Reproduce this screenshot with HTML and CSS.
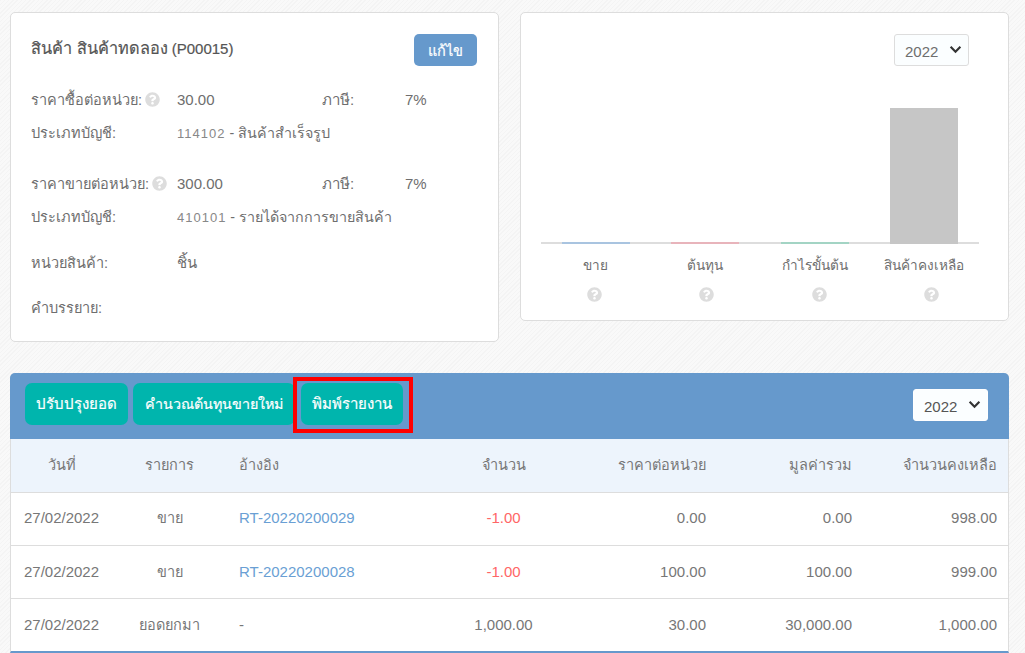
FILE: index.html
```html
<!DOCTYPE html>
<html lang="en">
<head>
  <meta charset="UTF-8" />
  <title>Product</title>
  <link rel="stylesheet" href="styles.css">
</head>
<body>

<svg class="defs" width="0" height="0">
  <symbol id="help" viewBox="0 0 512 512">
    <path d="M504 256c0 136.997-111.043 248-248 248S8 392.997 8 256C8 119.083 119.043 8 256 8s248 111.083 248 248zM262.655 90c-54.497 0-89.255 22.957-116.549 63.758-3.536 5.286-2.353 12.415 2.715 16.258l34.699 26.31c5.205 3.947 12.621 3.008 16.665-2.122 17.864-22.658 30.113-35.797 57.303-35.797 20.429 0 45.698 13.148 45.698 32.958 0 14.976-12.363 22.667-32.534 33.976C247.128 238.528 216 254.941 216 296v4c0 6.627 5.373 12 12 12h56c6.627 0 12-5.373 12-12v-1.333c0-28.462 83.186-29.647 83.186-106.667 0-58.002-60.165-102-116.531-102zM256 338c-25.365 0-46 20.635-46 46 0 25.364 20.635 46 46 46s46-20.636 46-46c0-25.365-20.635-46-46-46z"/>
  </symbol>
</svg>

<div class="top-row">
  <div class="card info-card">
    <div class="info-head">
      <h2><span class="title-th">สินค้า สินค้าทดลอง</span> (P00015)</h2>
      <button class="edit-btn">แก้ไข</button>
    </div>

    <div class="info-row">
      <span class="label">ราคาซื้อต่อหน่วย:<svg class="help-icon"><use href="#help"/></svg></span>
      <span class="value">30.00</span>
      <span class="tax-label">ภาษี:</span>
      <span>7%</span>
    </div>
    <div class="info-row">
      <span class="label">ประเภทบัญชี:</span>
      <span class="account"><span class="code">114102</span> - สินค้าสำเร็จรูป</span>
    </div>

    <div class="info-row group-start">
      <span class="label">ราคาขายต่อหน่วย:<svg class="help-icon"><use href="#help"/></svg></span>
      <span class="value">300.00</span>
      <span class="tax-label">ภาษี:</span>
      <span>7%</span>
    </div>
    <div class="info-row">
      <span class="label">ประเภทบัญชี:</span>
      <span class="account"><span class="code">410101</span> - รายได้จากการขายสินค้า</span>
    </div>

    <div class="info-row unit-row">
      <span class="label">หน่วยสินค้า:</span>
      <span class="value">ชิ้น</span>
    </div>
    <div class="info-row desc-row">
      <span class="label">คำบรรยาย:</span>
    </div>
  </div>

  <div class="card chart-card">
    <div class="chart-top">
      <div class="year-select">2022<svg class="chevron" viewBox="0 0 12 8"><path d="M1.5 1.5 6 6l4.5-4.5"/></svg></div>
    </div>
    <div class="bars">
      <div class="bar-slot"><div class="bar bar-sale"></div></div>
      <div class="bar-slot"><div class="bar bar-cost"></div></div>
      <div class="bar-slot"><div class="bar bar-profit"></div></div>
      <div class="bar-slot"><div class="bar bar-stock"></div></div>
    </div>
    <div class="bar-labels">
      <span>ขาย</span>
      <span>ต้นทุน</span>
      <span>กำไรขั้นต้น</span>
      <span>สินค้าคงเหลือ</span>
    </div>
    <div class="bar-help">
      <span><svg class="help-icon"><use href="#help"/></svg></span>
      <span><svg class="help-icon"><use href="#help"/></svg></span>
      <span><svg class="help-icon"><use href="#help"/></svg></span>
      <span><svg class="help-icon"><use href="#help"/></svg></span>
    </div>
  </div>
</div>

<div class="stock-panel">
  <div class="panel-bar">
    <button class="green-btn">ปรับปรุงยอด</button>
    <button class="green-btn calc-btn">คำนวณต้นทุนขายใหม่</button>
    <button class="green-btn marked">พิมพ์รายงาน</button>
    <div class="year-select panel-select">2022<svg class="chevron" viewBox="0 0 12 8"><path d="M1.5 1.5 6 6l4.5-4.5"/></svg></div>
  </div>
  <table>
    <colgroup>
      <col class="col-date"><col class="col-type"><col class="col-ref"><col class="col-qty"><col class="col-price"><col class="col-total"><col>
    </colgroup>
    <thead>
      <tr>
        <th class="center">วันที่</th>
        <th class="center">รายการ</th>
        <th>อ้างอิง</th>
        <th class="center">จำนวน</th>
        <th class="num">ราคาต่อหน่วย</th>
        <th class="num">มูลค่ารวม</th>
        <th class="num">จำนวนคงเหลือ</th>
      </tr>
    </thead>
    <tbody>
      <tr>
        <td class="center">27/02/2022</td>
        <td class="center thai">ขาย</td>
        <td><a href="#">RT-20220200029</a></td>
        <td class="center minus">-1.00</td>
        <td class="num">0.00</td>
        <td class="num">0.00</td>
        <td class="num">998.00</td>
      </tr>
      <tr>
        <td class="center">27/02/2022</td>
        <td class="center thai">ขาย</td>
        <td><a href="#">RT-20220200028</a></td>
        <td class="center minus">-1.00</td>
        <td class="num">100.00</td>
        <td class="num">100.00</td>
        <td class="num">999.00</td>
      </tr>
      <tr>
        <td class="center">27/02/2022</td>
        <td class="center thai">ยอดยกมา</td>
        <td>-</td>
        <td class="center">1,000.00</td>
        <td class="num">30.00</td>
        <td class="num">30,000.00</td>
        <td class="num">1,000.00</td>
      </tr>
    </tbody>
  </table>
</div>

</body>
</html>
```

FILE: styles.css
```css
body {
  font-family: "Liberation Sans", Arial, sans-serif;
  font-size: 15px;
  margin: 0;
  padding: 12px 16px 0 10px;
  color: #6e6e6e;
  overflow: hidden;
  background-color: #f7f7f7;
  background-image: repeating-linear-gradient(135deg, #f4f4f4 0, #f4f4f4 1px, #f9f9f9 1px, #f9f9f9 3px);
}

.defs {
  position: absolute;
}

.top-row {
  display: flex;
  justify-content: space-between;
  align-items: flex-start;
}

.card {
  width: 489px;
  box-sizing: border-box;
  background-color: #fff;
  border: 1px solid #ddd;
  border-radius: 5px;
}

/* product info */
.info-card {
  height: 330px;
  padding: 21px 21px 0 20px;
}

.info-head {
  display: flex;
  justify-content: space-between;
  align-items: center;
  margin-bottom: 17px;
}

h2 {
  margin: 0 0 4px;
  font-size: 15px;
  font-weight: normal;
  color: #555;
  -webkit-text-stroke: 0.2px #555;
}

.title-th {
  font-size: 16.3px;
}

.edit-btn {
  width: 63px;
  height: 32px;
  padding: 0;
  background-color: #6699cc;
  color: #fff;
  border: none;
  border-radius: 5px;
  font-family: inherit;
  font-size: 14.5px;
  -webkit-text-stroke: 0.2px #fff;
}

.info-row {
  display: grid;
  grid-template-columns: 146px 145px 83px 1fr;
  align-items: center;
  height: 33px;
}

.group-start {
  margin-top: 18px;
}

.unit-row {
  margin-top: 13px;
}

.desc-row {
  margin-top: 12px;
}

.label {
  display: flex;
  align-items: center;
  white-space: nowrap;
  font-size: 14.5px;
}

.account {
  grid-column: 2 / 5;
  font-size: 14.3px;
}

.code {
  font-size: 13px;
  letter-spacing: 1px;
  color: #888;
}

.help-icon {
  width: 15px;
  height: 15px;
  margin-left: 3px;
  fill: #ddd;
}

/* chart */
.chart-card {
  height: 309px;
  padding: 21px 29px 0 20px;
}

.chart-top {
  display: flex;
  justify-content: flex-end;
  padding-right: 10px;
}

.year-select {
  display: flex;
  align-items: center;
  justify-content: space-between;
  box-sizing: border-box;
  width: 75px;
  height: 32px;
  padding: 3px 6px 0 10px;
  background-color: #fbfeff;
  border: 1px solid #ddd;
  border-radius: 3px;
  font-size: 15px;
}

.chevron {
  width: 13px;
  height: 9px;
  margin-bottom: 5px;
  fill: none;
  stroke: #333;
  stroke-width: 2;
}

.bars {
  display: flex;
  align-items: flex-end;
  height: 176px;
  border-bottom: 2px solid #ddd;
}

.bar-slot {
  flex: 1;
  display: flex;
  justify-content: center;
}

.bar {
  width: 68px;
  margin-bottom: -2px;
}

.bar-sale {
  height: 2px;
  background-color: #a9c4e0;
}

.bar-cost {
  height: 2px;
  background-color: #e8b4bb;
}

.bar-profit {
  height: 2px;
  background-color: #a3d4c4;
}

.bar-stock {
  height: 136px;
  background-color: #c6c6c6;
}

.bar-labels {
  display: flex;
  margin-top: 12px;
  height: 20px;
  line-height: 20px;
  font-size: 13.6px;
}

.bar-labels span {
  flex: 1;
  text-align: center;
  white-space: nowrap;
}

.bar-help {
  display: flex;
  margin: 11px -9px 0 -3px;
}

.bar-help span {
  flex: 1;
  display: flex;
  justify-content: center;
}

.bar-help .help-icon {
  margin-left: 0;
}

/* table panel */
.stock-panel {
  margin-top: 31px;
  width: 999px;
  box-sizing: border-box;
  background-color: #fff;
  color: #777;
  border-radius: 5px 5px 0 0;
  border-right: 1px solid #ddd;
  border-left: 1px solid #ddd;
  border-bottom: 2px solid #6699cc;
}

.panel-bar {
  display: flex;
  align-items: flex-start;
  gap: 5px;
  height: 66px;
  box-sizing: border-box;
  padding: 10px 21px 0 15px;
  margin: 0 -1px;
  background-color: #6699cc;
  border-radius: 5px 5px 0 0;
}

.green-btn {
  height: 42px;
  padding: 0 11px;
  background-color: #00b5ad;
  color: #fff;
  border: none;
  border-radius: 7px;
  font-family: inherit;
  font-size: 15px;
  -webkit-text-stroke: 0.2px #fff;
}

.calc-btn {
  font-size: 14.3px;
  padding: 0 12px;
}

.marked {
  position: relative;
  margin-left: 1px;
}

/* red box marked on the screenshot */
.marked::after {
  content: "";
  position: absolute;
  top: -6px;
  left: -8px;
  right: -10px;
  bottom: -8px;
  border: 4px solid #f00;
}

.panel-select {
  margin: 6px 0 0 auto;
  border-color: #fff;
  color: #555;
}

table {
  width: 100%;
  table-layout: fixed;
  border-collapse: collapse;
}

.col-date {
  width: 101px;
}

.col-type {
  width: 115px;
}

.col-ref {
  width: 213px;
}

.col-qty {
  width: 127px;
}

.col-price {
  width: 150px;
}

.col-total {
  width: 146px;
}

th, td {
  height: 53px;
  box-sizing: border-box;
  padding: 0 11px 2px 12px;
  text-align: left;
  font-weight: normal;
  border-bottom: 1px solid #ddd;
  white-space: nowrap;
}

th {
  background-color: #edf4fc;
  font-size: 14.5px;
}

tbody tr:last-child td {
  border-bottom: none;
}

.center {
  text-align: center;
  padding: 0 0 2px;
}

tbody tr + tr td,
tbody tr + tr td.center {
  padding-bottom: 0;
}

.thai {
  font-size: 14.5px;
}

.num {
  text-align: right;
}

.minus {
  color: #f66;
}

a {
  color: #6a9fd4;
  text-decoration: none;
}
```
